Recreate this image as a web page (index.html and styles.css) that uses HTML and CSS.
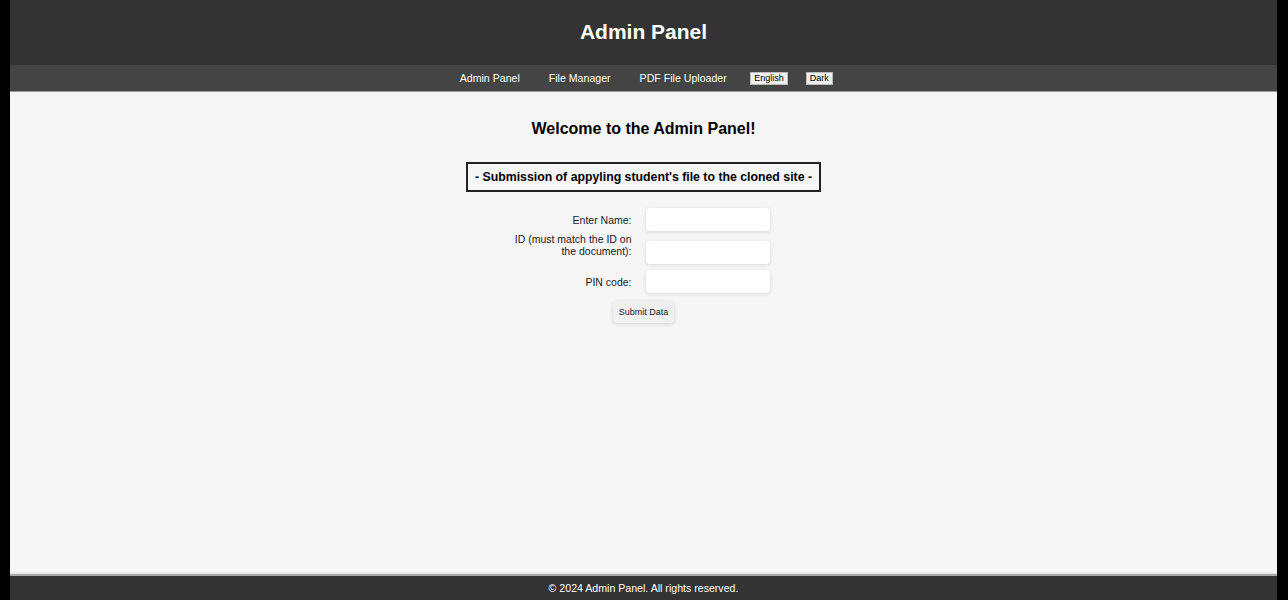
FILE: index.html
```html
<!DOCTYPE html>
<html lang="en">
<head>
<meta charset="utf-8">
<title>Admin Panel</title>
<link rel="stylesheet" href="styles.css">
</head>
<body>
<div class="page">
  <header class="site-header">
    <h1 class="site-title">Admin Panel</h1>
  </header>
  <nav class="site-nav">
    <a class="nav-link" href="#">Admin Panel</a>
    <a class="nav-link" href="#">File Manager</a>
    <a class="nav-link" href="#">PDF File Uploader</a>
    <button class="nav-btn" type="button">English</button>
    <button class="nav-btn" type="button">Dark</button>
  </nav>
  <main class="content">
    <h2 class="welcome">Welcome to the Admin Panel!</h2>
    <div class="boxed-title">- Submission of appyling student's file to the cloned site -</div>
    <form class="entry-form">
      <label class="field-label" for="name">Enter Name:</label>
      <input class="field-input" id="name" type="text">
      <label class="field-label field-label--two" for="sid">ID (must match the ID on the document):</label>
      <input class="field-input field-input--two" id="sid" type="text">
      <label class="field-label" for="pin">PIN code:</label>
      <input class="field-input" id="pin" type="text">
      <div class="form-actions">
        <button class="submit-btn" type="button">Submit Data</button>
      </div>
    </form>
  </main>
  <footer class="site-footer">© 2024 Admin Panel. All rights reserved.</footer>
</div>
</body>
</html>
```

FILE: styles.css
```css
html, body {
  margin: 0;
  padding: 0;
  height: 100%;
}
body {
  background: #000;
  font-family: "Liberation Sans", Arial, sans-serif;
}
.page {
  margin: 0 11px 0 10px;
  height: 600px;
  display: flex;
  flex-direction: column;
  background: #f6f6f6;
}
.site-header {
  height: 65px;
  background: #333;
  display: flex;
  align-items: center;
  justify-content: center;
}
.site-title {
  margin: 0;
  color: #fff;
  font-size: 21px;
  font-weight: bold;
  padding-bottom: 2px;
}
.site-nav {
  height: 26px;
  background: #444;
  border-bottom: 1px solid #999;
  display: flex;
  align-items: center;
  justify-content: center;
  padding-left: 0;
}
.nav-link {
  color: #fff;
  text-decoration: none;
  font-size: 10.6px;
  margin: 0 14.5px 1px;
}
.nav-btn {
  font-family: "Liberation Sans", Arial, sans-serif;
  font-size: 9px;
  line-height: 11px;
  padding: 0 3px;
  height: 13px;
  margin: 1px 9px 0;
  background: #f0f0f0;
  color: #000;
  border: 1px solid #bbb;
  border-radius: 0;
}
.content {
  flex: 1;
  display: flex;
  flex-direction: column;
  align-items: center;
}
.welcome {
  margin: 28px 0 0;
  font-size: 16px;
  font-weight: bold;
  color: #000;
  line-height: 18px;
}
.boxed-title {
  margin-top: 24px;
  border: 2px solid #222;
  padding: 6px 7px 5px;
  font-size: 12.3px;
  font-weight: bold;
  color: #000;
  line-height: 15px;
}
.entry-form {
  margin-top: 16px;
  display: grid;
  grid-template-columns: 120px 124px;
  column-gap: 14px;
  row-gap: 6px;
  align-items: center;
  margin-right: 6px;
}
.field-label {
  text-align: right;
  font-size: 10.5px;
  color: #1a1a1a;
  line-height: 12px;
}
.field-label--two {
  align-self: start;
  margin-top: -4px;
}
.field-input {
  height: 23px;
  box-sizing: border-box;
  border: none;
  border-radius: 4px;
  background: #fff;
  box-shadow: 0 1px 4px rgba(0, 0, 0, 0.12);
}
.field-input--two {
  align-self: start;
  margin-top: 4px;
}
.form-actions {
  grid-column: 1 / -1;
  display: flex;
  justify-content: center;
  padding-left: 6px;
  margin-top: 2px;
}
.submit-btn {
  font-family: "Liberation Sans", Arial, sans-serif;
  font-size: 9px;
  color: #222;
  width: 61px;
  height: 22px;
  border: none;
  border-radius: 4px;
  background: #f0f0f0;
  box-shadow: 0 1px 4px rgba(0, 0, 0, 0.15);
  padding: 0;
}
.site-footer {
  height: 24px;
  background: #333;
  border-top: 2px solid #aaa;
  box-shadow: 0 -1px 2px rgba(0,0,0,0.1);
  color: #fff;
  font-size: 10.6px;
  display: flex;
  align-items: center;
  justify-content: center;
}
```
